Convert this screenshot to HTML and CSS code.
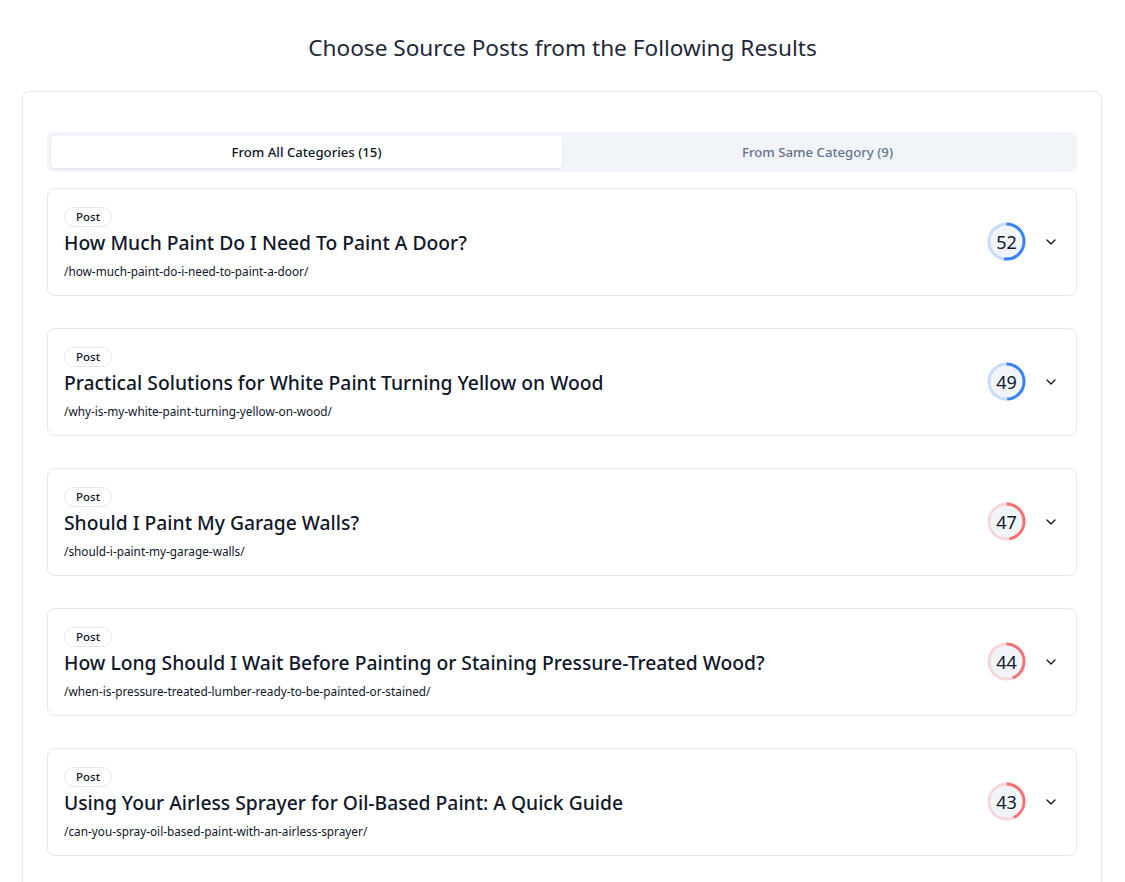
FILE: index.html
```html
<!DOCTYPE html>
<html>
<head>
<meta charset="utf-8">
<link rel="stylesheet" href="styles.css">
</head>
<body>
<h1 class="page-title">Choose Source Posts from the Following Results</h1>
<div class="panel">
  <div class="tabs">
    <div class="tab active">From All Categories (15)</div>
    <div class="tab">From Same Category (9)</div>
  </div>
  <div class="list">
    <div class="card">
      <div class="card-main">
        <span class="badge">Post</span>
        <div class="card-title">How Much Paint Do I Need To Paint A Door?</div>
        <div class="card-url">/how-much-paint-do-i-need-to-paint-a-door/</div>
      </div>
      <div class="card-side">
        <div class="score blue">
          <svg viewBox="0 0 40 40" width="39" height="39"><circle class="track" cx="20" cy="20" r="18"/><circle class="prog" cx="20" cy="20" r="18" style="stroke-dasharray: 58.8 113.1"/></svg>
          <span class="score-num">52</span>
        </div>
        <svg class="chev" viewBox="0 0 24 24" width="16" height="16"><path d="M6 9l6 6 6-6"/></svg>
      </div>
    </div>
    <div class="card">
      <div class="card-main">
        <span class="badge">Post</span>
        <div class="card-title">Practical Solutions for White Paint Turning Yellow on Wood</div>
        <div class="card-url">/why-is-my-white-paint-turning-yellow-on-wood/</div>
      </div>
      <div class="card-side">
        <div class="score blue">
          <svg viewBox="0 0 40 40" width="39" height="39"><circle class="track" cx="20" cy="20" r="18"/><circle class="prog" cx="20" cy="20" r="18" style="stroke-dasharray: 55.4 113.1"/></svg>
          <span class="score-num">49</span>
        </div>
        <svg class="chev" viewBox="0 0 24 24" width="16" height="16"><path d="M6 9l6 6 6-6"/></svg>
      </div>
    </div>
    <div class="card">
      <div class="card-main">
        <span class="badge">Post</span>
        <div class="card-title">Should I Paint My Garage Walls?</div>
        <div class="card-url">/should-i-paint-my-garage-walls/</div>
      </div>
      <div class="card-side">
        <div class="score red">
          <svg viewBox="0 0 40 40" width="39" height="39"><circle class="track" cx="20" cy="20" r="18"/><circle class="prog" cx="20" cy="20" r="18" style="stroke-dasharray: 53.2 113.1"/></svg>
          <span class="score-num">47</span>
        </div>
        <svg class="chev" viewBox="0 0 24 24" width="16" height="16"><path d="M6 9l6 6 6-6"/></svg>
      </div>
    </div>
    <div class="card">
      <div class="card-main">
        <span class="badge">Post</span>
        <div class="card-title">How Long Should I Wait Before Painting or Staining Pressure-Treated Wood?</div>
        <div class="card-url">/when-is-pressure-treated-lumber-ready-to-be-painted-or-stained/</div>
      </div>
      <div class="card-side">
        <div class="score red">
          <svg viewBox="0 0 40 40" width="39" height="39"><circle class="track" cx="20" cy="20" r="18"/><circle class="prog" cx="20" cy="20" r="18" style="stroke-dasharray: 49.8 113.1"/></svg>
          <span class="score-num">44</span>
        </div>
        <svg class="chev" viewBox="0 0 24 24" width="16" height="16"><path d="M6 9l6 6 6-6"/></svg>
      </div>
    </div>
    <div class="card">
      <div class="card-main">
        <span class="badge">Post</span>
        <div class="card-title">Using Your Airless Sprayer for Oil-Based Paint: A Quick Guide</div>
        <div class="card-url">/can-you-spray-oil-based-paint-with-an-airless-sprayer/</div>
      </div>
      <div class="card-side">
        <div class="score red">
          <svg viewBox="0 0 40 40" width="39" height="39"><circle class="track" cx="20" cy="20" r="18"/><circle class="prog" cx="20" cy="20" r="18" style="stroke-dasharray: 48.6 113.1"/></svg>
          <span class="score-num">43</span>
        </div>
        <svg class="chev" viewBox="0 0 24 24" width="16" height="16"><path d="M6 9l6 6 6-6"/></svg>
      </div>
    </div>
  </div>
</div>
</body>
</html>
```
FILE: styles.css
```css
* { box-sizing: border-box; }
html, body { margin: 0; padding: 0; background: #fff; }
body {
  font-family: "Noto Sans", "Open Sans", sans-serif;
  color: #0f172a;
  padding: 0 22px 0 22px;
  width: 1125px;
}
.page-title {
  margin: 0;
  padding-top: 32px;
  height: 91px;
  text-align: center;
  font-size: 22.6px;
  font-weight: 400;
  line-height: 32px;
  color: #1e293b;
}
.panel {
  width: 1080px;
  border: 1px solid #e2e8f0;
  border-radius: 8px;
  padding: 40px 24px 40px 24px;
}
.tabs {
  display: grid;
  grid-template-columns: 1fr 1fr;
  background: #f1f5f9;
  border-radius: 6px;
  padding: 4px;
  height: 40px;
}
.tab {
  display: flex;
  align-items: center;
  justify-content: center;
  font-size: 13.2px;
  font-weight: 500;
  color: #64748b;
  border-radius: 4px;
}
.tab.active {
  background: #fff;
  color: #0f172a;
  box-shadow: 0 1px 2px rgba(15, 23, 42, 0.08);
}
.list {
  margin-top: 16px;
  display: flex;
  flex-direction: column;
  gap: 32px;
}
.card {
  border: 1px solid #e2e8f0;
  border-radius: 8px;
  height: 108px;
  padding: 15px 16px 0 16px;
  display: flex;
  align-items: flex-start;
}
.card-main { flex: 1; min-width: 0; }
.badge {
  display: inline-block;
  height: 20px;
  line-height: 18px;
  padding: 0 11px;
  border: 1px solid #e2e8f0;
  border-radius: 10px;
  font-size: 11.5px;
  font-weight: 500;
  color: #0f172a;
}
.card-title {
  margin-top: 2px;
  font-size: 19.3px;
  line-height: 28px;
  font-weight: 500;
  color: #0f172a;
}
.card-url {
  margin-top: 6px;
  font-size: 11.8px;
  line-height: 16px;
  color: #0f172a;
}
.card-side {
  display: flex;
  align-items: center;
  gap: 17px;
  margin-top: 18px;
  margin-right: 1px;
}
.score {
  position: relative;
  width: 39px;
  height: 39px;
}
.score svg { display: block; transform: rotate(-90deg); }
.score .track { fill: #f1f5f9; stroke-width: 3; }
.score .prog { fill: none; stroke-width: 3; stroke-linecap: butt; }
.score.blue .track { stroke: #c7dcfb; }
.score.blue .prog { stroke: #3b82f6; }
.score.red .track { stroke: #f6d7d9; }
.score.red .prog { stroke: #f87171; }
.score-num {
  position: absolute;
  inset: 0;
  display: flex;
  align-items: center;
  justify-content: center;
  font-size: 18px;
  font-weight: 400;
  color: #0f172a;
}
.chev {
  fill: none;
  stroke: #0f172a;
  stroke-width: 2;
  stroke-linecap: round;
  stroke-linejoin: round;
}
```
